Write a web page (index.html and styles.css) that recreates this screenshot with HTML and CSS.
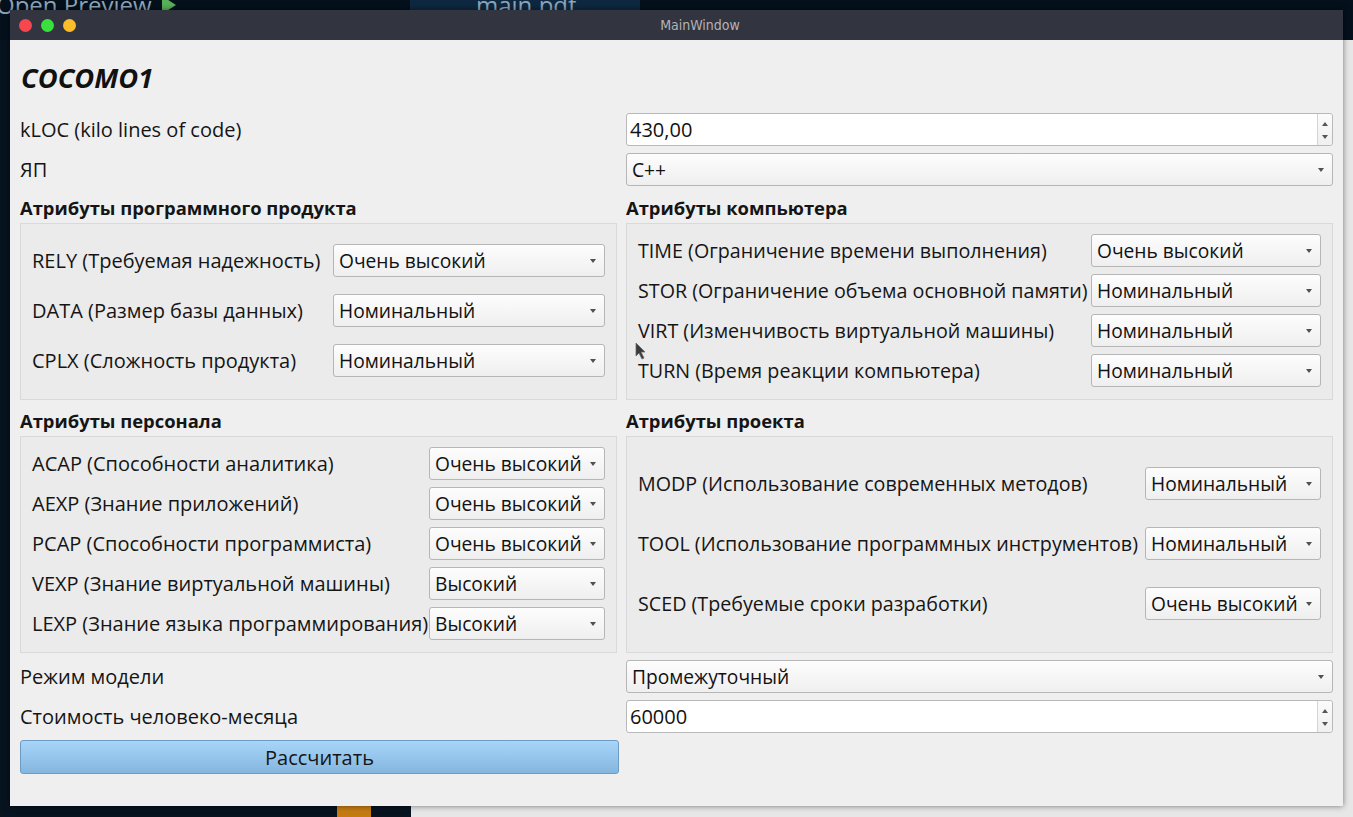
FILE: index.html
```html
<!DOCTYPE html>
<html lang="ru">
<head>
<meta charset="utf-8">
<title>MainWindow</title>
<link rel="stylesheet" href="styles.css">
</head>
<body>
<div class="desk">
  <div class="desk-top">
    <span class="desk-text">Open Preview</span>
    <span class="desk-play"></span>
    <div class="desk-tab"><span class="desk-tabtext">main.pdf</span></div>
  </div>
  <div class="desk-right"></div>
  <div class="desk-orange"></div>
</div>

<div class="window">
  <div class="titlebar">
    <div class="lights">
      <span class="light red"></span>
      <span class="light green"></span>
      <span class="light yellow"></span>
    </div>
    <div class="wintitle">MainWindow</div>
  </div>

  <div class="content">
    <h1 class="apptitle">COCOMO1</h1>

    <div class="row field">
      <div class="label">kLOC (kilo lines of code)</div>
      <div class="spin"><span class="val">430,00</span><span class="spinbtns"><i class="up"></i><i class="down"></i></span></div>
    </div>
    <div class="row field">
      <div class="label">ЯП</div>
      <div class="combo"><span class="val">C++</span><i class="arrow"></i></div>
    </div>

    <div class="row heading">
      <div class="htext">Атрибуты программного продукта</div>
      <div class="htext">Атрибуты компьютера</div>
    </div>
    <div class="row groups g1">
      <div class="group gl1">
        <div class="grow"><span class="glabel">RELY (Требуемая надежность)</span><div class="combo"><span class="val">Очень высокий</span><i class="arrow"></i></div></div>
        <div class="grow"><span class="glabel">DATA (Размер базы данных)</span><div class="combo"><span class="val">Номинальный</span><i class="arrow"></i></div></div>
        <div class="grow"><span class="glabel">CPLX (Сложность продукта)</span><div class="combo"><span class="val">Номинальный</span><i class="arrow"></i></div></div>
      </div>
      <div class="group gr1">
        <div class="grow"><span class="glabel">TIME (Ограничение времени выполнения)</span><div class="combo"><span class="val">Очень высокий</span><i class="arrow"></i></div></div>
        <div class="grow"><span class="glabel">STOR (Ограничение объема основной памяти)</span><div class="combo"><span class="val">Номинальный</span><i class="arrow"></i></div></div>
        <div class="grow"><span class="glabel">VIRT (Изменчивость виртуальной машины)</span><div class="combo"><span class="val">Номинальный</span><i class="arrow"></i></div></div>
        <div class="grow"><span class="glabel">TURN (Время реакции компьютера)</span><div class="combo"><span class="val">Номинальный</span><i class="arrow"></i></div></div>
      </div>
    </div>

    <div class="row heading">
      <div class="htext">Атрибуты персонала</div>
      <div class="htext">Атрибуты проекта</div>
    </div>
    <div class="row groups g2">
      <div class="group gl2">
        <div class="grow"><span class="glabel">ACAP (Способности аналитика)</span><div class="combo"><span class="val">Очень высокий</span><i class="arrow"></i></div></div>
        <div class="grow"><span class="glabel">AEXP (Знание приложений)</span><div class="combo"><span class="val">Очень высокий</span><i class="arrow"></i></div></div>
        <div class="grow"><span class="glabel">PCAP (Способности программиста)</span><div class="combo"><span class="val">Очень высокий</span><i class="arrow"></i></div></div>
        <div class="grow"><span class="glabel">VEXP (Знание виртуальной машины)</span><div class="combo"><span class="val">Высокий</span><i class="arrow"></i></div></div>
        <div class="grow"><span class="glabel">LEXP (Знание языка программирования)</span><div class="combo"><span class="val">Высокий</span><i class="arrow"></i></div></div>
      </div>
      <div class="group gr2">
        <div class="grow"><span class="glabel">MODP (Использование современных методов)</span><div class="combo"><span class="val">Номинальный</span><i class="arrow"></i></div></div>
        <div class="grow"><span class="glabel">TOOL (Использование программных инструментов)</span><div class="combo"><span class="val">Номинальный</span><i class="arrow"></i></div></div>
        <div class="grow"><span class="glabel">SCED (Требуемые сроки разработки)</span><div class="combo"><span class="val">Очень высокий</span><i class="arrow"></i></div></div>
      </div>
    </div>

    <div class="row field mode">
      <div class="label">Режим модели</div>
      <div class="combo"><span class="val">Промежуточный</span><i class="arrow"></i></div>
    </div>
    <div class="row field">
      <div class="label">Стоимость человеко-месяца</div>
      <div class="spin"><span class="val">60000</span><span class="spinbtns"><i class="up"></i><i class="down"></i></span></div>
    </div>
    <div class="row field">
      <button class="calc" type="button">Рассчитать</button>
      <div></div>
    </div>
  </div>
</div>

<svg class="cursor" width="12" height="18" viewBox="0 0 12 18"><path d="M1 1 L1 14 L4 11 L7 17 L9 16 L6 10 L10 10 Z" fill="#3a3a3a" stroke="#6a6a6a" stroke-width="0.8"/></svg>
</body>
</html>
```
FILE: styles.css
```css
* { box-sizing: border-box; }
html, body { margin: 0; padding: 0; }
body {
  width: 1353px;
  height: 817px;
  overflow: hidden;
  background: #07131f;
  font-family: "Open Sans", "Noto Sans", sans-serif;
  color: #1a1a1a;
  position: relative;
}

/* backdrop */
.desk { position: absolute; inset: 0; }
.desk-top { position: absolute; left: 0; top: 0; right: 0; height: 40px; background: #04101c; }
.desk-text { position: absolute; left: -4px; top: -12px; font-size: 24px; color: #8fa4b8; }
.desk-play { position: absolute; left: 162px; top: -4px; width: 0; height: 0; border-left: 14px solid #57b15a; border-top: 9px solid transparent; border-bottom: 9px solid transparent; }
.desk-tab { position: absolute; left: 410px; top: -6px; width: 230px; height: 20px; background: #0d2840; }
.desk-tabtext { position: absolute; left: 66px; top: -6px; font-size: 24px; color: #8fa4b8; }
.desk-right { position: absolute; left: 411px; top: 40px; right: 0; bottom: 0; background: #e7e7e7; }
.desk-orange { position: absolute; left: 337px; top: 806px; width: 34px; height: 11px; background: #c47c12; }

/* window */
.window {
  position: absolute;
  left: 10px;
  top: 10px;
  width: 1333px;
  height: 796px;
  background: #efefef;
  box-shadow: 0 0 6px rgba(0,0,0,0.5);
  display: flex;
  flex-direction: column;
}
.titlebar {
  height: 30px;
  background: #32343f;
  display: flex;
  align-items: center;
  position: relative;
}
.lights { display: flex; gap: 9px; padding-left: 9px; position: absolute; left: 0; top: 9px; }
.light { width: 13px; height: 13px; border-radius: 50%; display: block; }
.light.red { background: #f5474f; }
.light.green { background: #3be03f; }
.light.yellow { background: #fbbd2b; }
.wintitle {
  flex: 1;
  text-align: center;
  padding-left: 47px;
  font-family: "DejaVu Sans Condensed", "DejaVu Sans", sans-serif;
  font-size: 14px;
  color: #b3b3b6;
}

.content { padding: 0 10px; display: flex; flex-direction: column; }
.apptitle {
  margin: 0;
  height: 73px;
  padding-top: 20px;
  padding-left: 1px;
  font-size: 27.3px;
  line-height: 36px;
  font-weight: 700;
  font-style: italic;
  color: #111;
}

.row {
  display: grid;
  grid-template-columns: 597px 707px;
  column-gap: 9px;
}
.row.field { height: 33px; margin-bottom: 7px; }
.row.field.mode { margin-top: 7px; height: 32px; margin-bottom: 8px; }
.label { font-size: 20px; line-height: 33px; color: #151515; white-space: nowrap; }

.row.heading { height: 30px; }
.htext { font-size: 18.4px; font-weight: 700; line-height: 30px; color: #151515; }
.g1 { height: 177px; margin-bottom: 6px; }
.g2 { height: 217px; }

.group {
  border: 1px solid #d9d9d9;
  background: #ebebeb;
  display: flex;
  flex-direction: column;
  padding: 0 11px;
}
.grow { display: grid; align-items: center; height: 33px; column-gap: 6px; }
.glabel { font-size: 20px; color: #151515; white-space: nowrap; }
.gr1 .glabel, .gr2 .glabel { font-size: 19.7px; }

.gl1 { padding-top: 20px; gap: 17px; }
.gl1 .grow { grid-template-columns: minmax(0, 1fr) 272px; }
.gr1 { padding-top: 10px; gap: 7px; }
.gr1 .grow { grid-template-columns: minmax(0, 1fr) 230px; }
.gl2 { padding-top: 10px; gap: 7px; }
.gl2 .grow { grid-template-columns: minmax(0, 1fr) 176px; }
.gr2 { padding-top: 30px; gap: 27px; }
.gr2 .grow { grid-template-columns: minmax(0, 1fr) 176px; }

/* combo */
.combo {
  position: relative;
  height: 33px;
  border: 1px solid #b6b6b6;
  border-radius: 3px;
  background: linear-gradient(#fdfdfd, #efefef);
  display: flex;
  align-items: center;
  padding-left: 5px;
}
.row.field .combo { height: 100%; }
.val { font-size: 19.2px; color: #111; white-space: nowrap; }
.spin .val { font-size: 20px; }
.arrow {
  position: absolute;
  right: 8px;
  top: 50%;
  margin-top: -2px;
  width: 0; height: 0;
  border-left: 3.5px solid transparent;
  border-right: 3.5px solid transparent;
  border-top: 4px solid #505050;
}

/* spinbox */
.spin {
  position: relative;
  height: 33px;
  border: 1px solid #b9b9b9;
  border-radius: 3px;
  background: #fff;
  display: flex;
  align-items: center;
  padding-left: 3px;
}
.spinbtns {
  position: absolute;
  right: 0; top: 0; bottom: 0;
  width: 15px;
  border-left: 1px solid #d4d4d4;
  background: linear-gradient(#fbfbfb, #f0f0f0);
  border-radius: 0 3px 3px 0;
}
.spinbtns .up, .spinbtns .down {
  position: absolute;
  left: 4px;
  width: 0; height: 0;
  border-left: 3px solid transparent;
  border-right: 3px solid transparent;
}
.spinbtns .up { top: 8px; border-bottom: 4px solid #555; }
.spinbtns .down { top: 21px; border-top: 4px solid #555; }

/* button */
.calc {
  height: 34px;
  margin: 0;
  border: 1px solid #6f9bc3;
  border-radius: 3px;
  background: linear-gradient(#a7d5f8, #85b6df);
  font-family: "Open Sans", "Noto Sans", sans-serif;
  font-size: 20px;
  color: #151515;
  width: 599px;
}

.cursor { position: absolute; left: 635px; top: 342px; }
```
